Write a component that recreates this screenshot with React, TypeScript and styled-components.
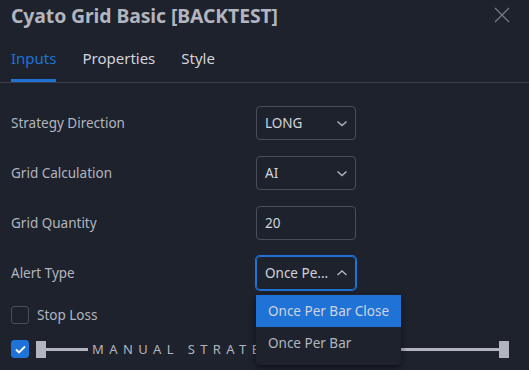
import React from 'react';
import styled, { createGlobalStyle } from 'styled-components';

const colors = {
  background: '#1e222d',
  text: '#b2b5be',
  textBright: '#d1d4dc',
  border: '#4a4e5a',
  divider: '#3a3e4a',
  accent: '#1f72d6',
  muted: '#787b86',
};

const GlobalStyle = createGlobalStyle`
  body {
    margin: 0;
    background: ${colors.background};
    font-family: "Noto Sans", "Open Sans", sans-serif;
    color: ${colors.text};
  }
`;

const Dialog = styled.div`
  width: 529px;
  height: 370px;
  overflow: hidden;
  background: ${colors.background};
  display: flex;
  flex-direction: column;
`;

const Header = styled.div`
  height: 30px;
  display: flex;
  align-items: center;
  justify-content: space-between;
  padding: 0 19px 0 11px;
`;

const Title = styled.h1`
  margin: 0;
  font-size: 19.4px;
  font-weight: 700;
  color: ${colors.text};
  letter-spacing: -0.1px;
`;

const CloseButton = styled.button`
  border: none;
  background: transparent;
  padding: 0;
  width: 16px;
  height: 16px;
  color: ${colors.muted};
  display: flex;
`;

const TabBar = styled.div`
  height: 52px;
  display: flex;
  gap: 26px;
  padding: 0 11px;
  border-bottom: 1px solid ${colors.divider};
`;

const Tab = styled.div<{ $active?: boolean }>`
  display: flex;
  align-items: center;
  padding-top: 6px;
  font-size: 15px;
  color: ${(p) => (p.$active ? colors.accent : colors.textBright)};
  border-bottom: 3px solid ${(p) => (p.$active ? colors.accent : 'transparent')};
`;

const Body = styled.div`
  padding: 23px 20px 0 11px;
  display: flex;
  flex-direction: column;
  gap: 16px;
`;

const Row = styled.div`
  display: flex;
  align-items: center;
  height: 34px;
`;

const Label = styled.span`
  width: 245px;
  font-size: 13.5px;
  color: ${colors.text};
`;

const SelectBox = styled.div<{ $open?: boolean }>`
  position: relative;
  box-sizing: border-box;
  width: 100px;
  height: 34px;
  border: 1px solid ${(p) => (p.$open ? colors.accent : colors.border)};
  ${(p) => (p.$open ? `box-shadow: 0 0 0 1px ${colors.accent};` : '')}
  border-radius: 4px;
  display: flex;
  align-items: center;
  justify-content: space-between;
  padding: 0 7px 0 8px;
  font-size: 13.5px;
  color: ${colors.textBright};
`;

const Chevron = styled.svg`
  width: 12px;
  height: 12px;
  color: ${colors.text};
`;

const Menu = styled.div`
  position: absolute;
  top: calc(100% + 5px);
  left: -1px;
  width: 145px;
  padding: 1px 0 6px;
  background: ${colors.background};
  border-radius: 4px;
  box-shadow: 0 2px 6px rgba(0, 0, 0, 0.55);
  z-index: 2;
`;

const MenuItem = styled.div<{ $selected?: boolean }>`
  height: 32px;
  display: flex;
  align-items: center;
  padding: 0 11px 0 12px;
  font-size: 13.5px;
  white-space: nowrap;
  color: ${(p) => (p.$selected ? colors.textBright : colors.text)};
  background: ${(p) => (p.$selected ? colors.accent : 'transparent')};
`;

const CheckRow = styled.div`
  display: flex;
  align-items: center;
  height: 18px;
  gap: 8px;
  font-size: 13.5px;
`;

const Checkbox = styled.div<{ $checked?: boolean }>`
  box-sizing: border-box;
  width: 18px;
  height: 18px;
  flex-shrink: 0;
  border-radius: 3px;
  border: 1px solid ${(p) => (p.$checked ? colors.accent : colors.border)};
  background: ${(p) => (p.$checked ? colors.accent : 'transparent')};
  display: flex;
  align-items: center;
  justify-content: center;
  color: #fff;
`;

const GroupRow = styled.div`
  display: flex;
  align-items: center;
  height: 18px;
  gap: 7px;
`;

const Group = styled.div`
  flex: 1;
  display: flex;
  align-items: center;
`;

const Handle = styled.div`
  width: 10px;
  height: 17px;
  background: ${colors.text};
  flex-shrink: 0;
`;

const Line = styled.div<{ $grow?: boolean }>`
  height: 3px;
  background: ${colors.text};
  ${(p) => (p.$grow ? 'flex: 1;' : 'width: 42px;')}
`;

const GroupTitle = styled.span`
  font-size: 13px;
  letter-spacing: 5.4px;
  padding: 0 4px 0 4px;
  color: ${colors.text};
  white-space: nowrap;
`;

const ChevronDown = () => (
  <Chevron viewBox="0 0 12 12" fill="none">
    <path d="M1.5 4.5L6 8.5l4.5-4" stroke="currentColor" strokeWidth="1.4" />
  </Chevron>
);

const ChevronUp = () => (
  <Chevron viewBox="0 0 12 12" fill="none">
    <path d="M1.5 8L6 4l4.5 4" stroke="currentColor" strokeWidth="1.4" />
  </Chevron>
);

const App: React.FC = () => {
  return (
    <>
      <GlobalStyle />
      <Dialog>
        <Header>
          <Title>Cyato Grid Basic [BACKTEST]</Title>
          <CloseButton>
            <svg width="16" height="16" viewBox="0 0 16 16" fill="none">
              <path d="M1 1l14 14M15 1L1 15" stroke="currentColor" strokeWidth="1.2" />
            </svg>
          </CloseButton>
        </Header>
        <TabBar>
          <Tab $active>Inputs</Tab>
          <Tab>Properties</Tab>
          <Tab>Style</Tab>
        </TabBar>
        <Body>
          <Row>
            <Label>Strategy Direction</Label>
            <SelectBox>
              LONG
              <ChevronDown />
            </SelectBox>
          </Row>
          <Row>
            <Label>Grid Calculation</Label>
            <SelectBox>
              AI
              <ChevronDown />
            </SelectBox>
          </Row>
          <Row>
            <Label>Grid Quantity</Label>
            <SelectBox>20</SelectBox>
          </Row>
          <Row>
            <Label>Alert Type</Label>
            <SelectBox $open>
              Once Pe...
              <ChevronUp />
              <Menu>
                <MenuItem $selected>Once Per Bar Close</MenuItem>
                <MenuItem>Once Per Bar</MenuItem>
              </Menu>
            </SelectBox>
          </Row>
          <CheckRow>
            <Checkbox />
            Stop Loss
          </CheckRow>
          <GroupRow>
            <Checkbox $checked>
              <svg width="11" height="9" viewBox="0 0 11 9" fill="none">
                <path d="M1 4.5l3 3L10 1.5" stroke="currentColor" strokeWidth="1.8" />
              </svg>
            </Checkbox>
            <Group>
              <Handle />
              <Line />
              <GroupTitle>MANUAL STRATEGY</GroupTitle>
              <Line $grow />
              <Handle />
            </Group>
          </GroupRow>
        </Body>
      </Dialog>
    </>
  );
};

export default App;
